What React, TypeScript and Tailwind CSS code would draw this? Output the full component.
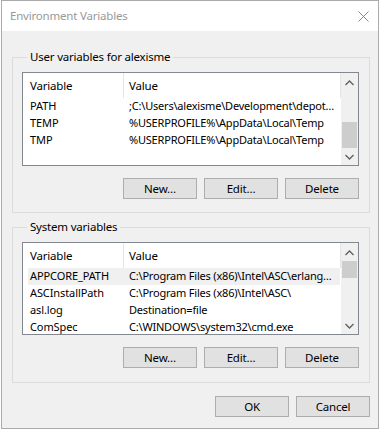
import React from "react";

type Row = { name: string; value: string; selected?: boolean };

const userRows: Row[] = [
  { name: "PATH", value: ";C:\\Users\\alexisme\\Development\\depot…" },
  { name: "TEMP", value: "%USERPROFILE%\\AppData\\Local\\Temp" },
  { name: "TMP", value: "%USERPROFILE%\\AppData\\Local\\Temp" },
];

const systemRows: Row[] = [
  { name: "APPCORE_PATH", value: "C:\\Program Files (x86)\\Intel\\ASC\\erlang…", selected: true },
  { name: "ASCInstallPath", value: "C:\\Program Files (x86)\\Intel\\ASC\\" },
  { name: "asl.log", value: "Destination=file" },
  { name: "ComSpec", value: "C:\\WINDOWS\\system32\\cmd.exe" },
];

function Chevron({ up }: { up?: boolean }) {
  return (
    <svg width="9" height="6" viewBox="0 0 9 6" className="block">
      <path
        d={up ? "M0.5 5 L4.5 1 L8.5 5" : "M0.5 1 L4.5 5 L8.5 1"}
        fill="none"
        stroke="#606060"
        strokeWidth="1.3"
      />
    </svg>
  );
}

function Button({ label }: { label: string }) {
  return (
    <div className="w-[74px] h-[21px] shrink-0 bg-[#e1e1e1] border border-[#adadad] flex items-center justify-center text-black">
      {label}
    </div>
  );
}

function ListView({
  rows,
  height,
  thumbTop,
  thumbHeight,
}: {
  rows: Row[];
  height: string;
  thumbTop: string;
  thumbHeight: string;
}) {
  return (
    <div className={`border border-[#828790] bg-white flex overflow-hidden ${height}`}>
      <div className="flex-1 min-w-0 flex flex-col overflow-hidden">
        <div className="flex h-[25px] shrink-0">
          <div className="w-[101px] shrink-0 border-r border-[#e5e5e5] pl-[7px] flex items-center">Variable</div>
          <div className="flex-1 border-r border-[#e5e5e5] pl-[5px] flex items-center">Value</div>
        </div>
        {rows.map((r) => (
          <div
            key={r.name}
            className={`flex h-[17px] shrink-0 items-center ml-[5px] mr-[1px] ${r.selected ? "bg-[#f0f0f0]" : ""}`}
          >
            <div className="w-[96px] shrink-0 pl-[2px] whitespace-nowrap text-[11px] tracking-[-0.1px]">{r.name}</div>
            <div className="flex-1 min-w-0 pl-[5px] whitespace-nowrap overflow-hidden text-[11px] tracking-[-0.2px]">{r.value}</div>
          </div>
        ))}
      </div>
      <div className="w-[17px] bg-[#f0f0f0] flex flex-col shrink-0">
        <div className="h-[17px] flex items-center justify-center pt-[2px]">
          <Chevron up />
        </div>
        <div className="flex-1 flex flex-col">
          <div className={thumbTop} />
          <div className={`mx-[1px] bg-[#cdcdcd] ${thumbHeight}`} />
        </div>
        <div className="h-[17px] flex items-center justify-center">
          <Chevron />
        </div>
      </div>
    </div>
  );
}

function Group({
  title,
  children,
  pb,
}: {
  title: string;
  children: React.ReactNode;
  pb: string;
}) {
  return (
    <fieldset className={`min-w-0 border border-[#dcdcdc] pl-[9px] pr-[10px] ${pb}`}>
      <legend className="ml-[5px] px-[3px] leading-[16px]">{title}</legend>
      {children}
    </fieldset>
  );
}

export default function App() {
  return (
    <div
      className="w-[380px] h-[430px] bg-white text-[11.5px] tracking-[-0.2px] text-black"
      style={{ fontFamily: '"Segoe UI", "Noto Sans", sans-serif' }}
    >
      <div className="ml-[1px] w-[378px] h-[429px] border border-[#aaaaaa] bg-[#f0f0f0] flex flex-col">
        <div className="h-[30px] bg-white flex items-center justify-between pl-[8px] pr-[9px] shrink-0">
          <span className="text-[#999999]">Environment Variables</span>
          <svg width="11" height="11" viewBox="0 0 11 11">
            <path d="M0.5 0.5 L10.5 10.5 M10.5 0.5 L0.5 10.5" stroke="#8a8a8a" strokeWidth="1" />
          </svg>
        </div>
        <div className="pl-[10px] pr-[8px] pt-[18px] flex flex-col">
          <Group title="User variables for alexisme" pb="pb-[13px]">
            <div className="mt-[7px]">
              <ListView rows={userRows} height="h-[94px]" thumbTop="flex-1" thumbHeight="h-[26px]" />
            </div>
            <div className="flex justify-end gap-[7px] mt-[12px]">
              <Button label="New…" />
              <Button label="Edit…" />
              <Button label="Delete" />
            </div>
          </Group>
          <div className="mt-[6px]">
            <Group title="System variables" pb="pb-[14px]">
              <div className="mt-[7px]">
                <ListView rows={systemRows} height="h-[93px]" thumbTop="h-[1px]" thumbHeight="h-[17px]" />
              </div>
              <div className="flex justify-end gap-[7px] mt-[12px]">
                <Button label="New…" />
                <Button label="Edit…" />
                <Button label="Delete" />
              </div>
            </Group>
          </div>
          <div className="flex justify-end gap-[7px] mt-[13px]">
            <Button label="OK" />
            <Button label="Cancel" />
          </div>
        </div>
      </div>
    </div>
  );
}
